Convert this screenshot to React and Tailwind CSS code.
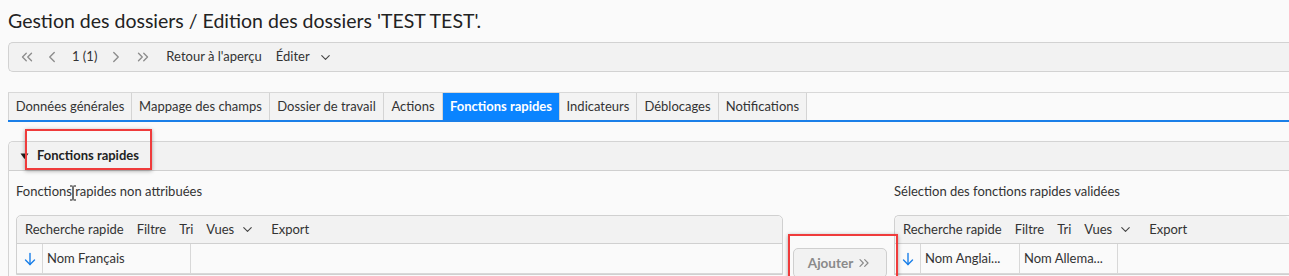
import { ChevronsLeft, ChevronLeft, ChevronRight, ChevronsRight, ChevronDown } from 'lucide-react';

const tabs = [
  { label: 'Données générales', w: 'w-[124px]' },
  { label: 'Mappage des champs', w: 'w-[138px]' },
  { label: 'Dossier de travail', w: 'w-[114px]' },
  { label: 'Actions', w: 'w-[59px]' },
  { label: 'Fonctions rapides', w: 'w-[117px]', active: true },
  { label: 'Indicateurs', w: 'w-[77px]' },
  { label: 'Déblocages', w: 'w-[82px]' },
  { label: 'Notifications', w: 'w-[88px]' },
];

function SortArrow() {
  return (
    <svg width="12" height="14" viewBox="0 0 12 14" fill="none" stroke="#1a7fe8" strokeWidth="1.4" strokeLinecap="round">
      <path d="M6 1.5v11" />
      <path d="M1.5 8l4.5 4.5L10.5 8" />
    </svg>
  );
}

function GridToolbar() {
  return (
    <div className="h-[28px] flex items-center gap-[13px] pl-[8px] bg-[#f2f2f2] border-b border-[#d0d0d0] rounded-t-[5px]">
      <span>Recherche rapide</span>
      <span>Filtre</span>
      <span>Tri</span>
      <span className="flex items-center gap-[6px]">
        Vues <ChevronDown size={15} strokeWidth={1.8} className="text-[#444]" />
      </span>
      <span className="ml-[3px]">Export</span>
    </div>
  );
}

export default function App() {
  return (
    <div className="relative w-[1289px] h-[276px] overflow-hidden bg-[#fafafa] text-[13px] text-[#333] font-['Lato','Liberation_Sans',sans-serif]">
      {/* title */}
      <div className="h-[42px] flex items-center px-2 text-[19.5px] text-[#222]">
        Gestion des dossiers / Edition des dossiers 'TEST TEST'.
      </div>

      {/* record toolbar */}
      <div className="ml-2 h-[30px] flex items-center border border-r-0 border-[#d2d2d2] rounded-l-[5px] bg-[#f2f2f2] pl-[9px]">
        <ChevronsLeft size={18} strokeWidth={1.8} className="text-[#8c8c8c]" />
        <ChevronLeft size={18} strokeWidth={1.8} className="ml-[7px] text-[#8c8c8c]" />
        <span className="ml-[11px]">1 (1)</span>
        <ChevronRight size={18} strokeWidth={1.8} className="ml-[10px] text-[#8c8c8c]" />
        <ChevronsRight size={18} strokeWidth={1.8} className="ml-[9px] text-[#8c8c8c]" />
        <span className="ml-[14px]">Retour à l'aperçu</span>
        <span className="ml-[14px]">Éditer</span>
        <ChevronDown size={15} strokeWidth={1.8} className="ml-[8px] text-[#444]" />
      </div>

      {/* tabs */}
      <div className="ml-2 mt-[20px] flex border-t border-[#d8d8d8] border-b-2 border-b-[#1a7fe8]">
        {tabs.map((t, i) => (
          <div
            key={t.label}
            className={`${t.w} h-[27px] flex items-center justify-center border-r border-[#d4d4d4] ${i === 0 ? 'border-l' : ''} ${
              t.active ? 'bg-[#0a84ff] text-white font-bold' : 'bg-[#f3f3f3]'
            }`}
          >
            {t.label}
          </div>
        ))}
      </div>

      {/* section */}
      <div className="ml-2 mt-[19px] border-l border-t border-[#d4d4d4] rounded-tl-[5px]">
        <div className="h-[29px] flex items-center bg-[#f2f2f2] border-b border-[#cfcfcf] rounded-tl-[5px] pl-[11px]">
          <svg width="9" height="7" viewBox="0 0 9 7">
            <path d="M0.5 0.5h8L4.5 6z" fill="#222" />
          </svg>
          <span className="ml-[8px] font-bold text-[#222]">Fonctions rapides</span>
        </div>

        <div className="flex items-start pt-[12px] pl-[7px]">
          <div className="w-[767px]">
            <div className="leading-[16px]">Fonctions rapides non attribuées</div>
            <div className="mt-[16px] border border-[#d0d0d0] rounded-t-[5px]">
              <GridToolbar />
              <div className="h-[30px] flex border-b border-[#d8d8d8]">
                <div className="w-[26px] flex items-center justify-center border-r border-[#d8d8d8]">
                  <SortArrow />
                </div>
                <div className="w-[148px] flex items-center pl-[4px] border-r border-[#d8d8d8]">Nom Français</div>
              </div>
            </div>
          </div>

          <div className="w-[111px] pt-[65px] pl-[10px]">
            <div className="w-[94px] h-[30px] flex items-center justify-center gap-[3px] border border-[#cfcfcf] rounded-[5px] bg-[#f2f2f2] text-[#8a8a8a] font-bold text-[13.5px]">
              Ajouter <ChevronsRight size={16} strokeWidth={1.8} />
            </div>
          </div>

          <div className="flex-1">
            <div className="leading-[16px]">Sélection des fonctions rapides validées</div>
            <div className="mt-[16px] border border-r-0 border-[#d0d0d0] rounded-tl-[5px]">
              <GridToolbar />
              <div className="h-[30px] flex border-b border-[#d8d8d8]">
                <div className="w-[26px] flex items-center justify-center border-r border-[#d8d8d8]">
                  <SortArrow />
                </div>
                <div className="w-[99px] flex items-center pl-[4px] border-r border-[#d8d8d8]">Nom Anglai...</div>
                <div className="w-[98px] flex items-center pl-[4px] border-r border-[#d8d8d8]">Nom Allema...</div>
              </div>
            </div>
          </div>
        </div>
      </div>

      {/* annotation boxes */}
      <div className="absolute left-[25px] top-[129px] w-[127px] h-[41px] border-2 border-[#ef3b3b] shadow-[0_1px_4px_rgba(0,0,0,0.35)]" />
      <div className="absolute left-[788px] top-[234px] w-[110px] h-[60px] border-2 border-[#ef3b3b] shadow-[0_1px_4px_rgba(0,0,0,0.35)]" />

      {/* text cursor */}
      <svg className="absolute left-[69px] top-[185px]" width="8" height="16" viewBox="0 0 8 16" fill="none" stroke="#111" strokeWidth="1.2">
        <path d="M1 1h2.5M4.5 1H7M4 1.5v13M1 15h2.5M4.5 15H7" />
      </svg>
    </div>
  );
}
